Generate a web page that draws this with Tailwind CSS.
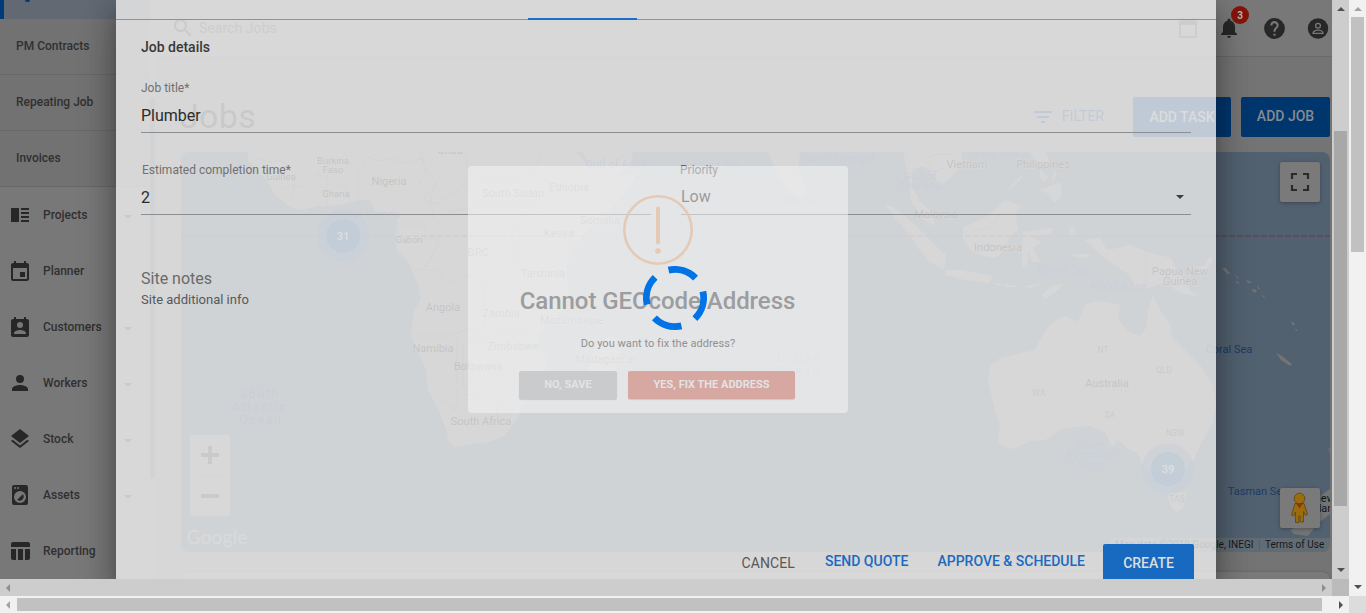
<!DOCTYPE html>
<html lang="en">
<head>
<meta charset="utf-8">
<title>Jobs</title>
<script src="https://cdn.jsdelivr.net/npm/@tailwindcss/browser@4"></script>
</head>
<body class="w-[1366px] h-[613px] overflow-hidden font-['Roboto',sans-serif] bg-[#f1f1f1]">
<div class="grid grid-cols-[1349px_17px] grid-rows-[596px_17px] w-[1366px] h-[613px]">
  <div class="relative grid grid-cols-[1332px_17px] grid-rows-[579px_17px] overflow-hidden">
    <!-- Page -->
    <div class="relative flex overflow-hidden bg-[#747474]">
      <aside class="w-[155px] h-[579px] shrink-0 flex bg-[#787878] text-[#303030] text-xs font-medium">
        <nav class="w-[150px] flex flex-col">
          <div class="relative h-[19px] bg-[#626973] border-l-4 border-[#003a78] shrink-0">
            <div class="ml-[21px] w-[5px] h-[2px] rounded-b-full bg-[#003a78]"></div>
          </div>
          <div class="h-14 shrink-0 pl-4 pb-[1px] flex items-center bg-[#727272] border-b border-[#686868]">PM Contracts</div>
          <div class="h-14 shrink-0 pl-4 pb-[1px] flex items-center bg-[#727272] border-b border-[#686868]">Repeating Job</div>
          <div class="h-14 shrink-0 pl-4 pb-[1px] flex items-center bg-[#727272] border-b border-[#686868]">Invoices</div>
          <div class="h-14 shrink-0 pl-2 pr-[18px] flex items-center gap-[11px]">
            <svg class="size-6" viewBox="0 0 24 24" fill="#272727"><path d="M3 5h8v14H3zM13 5h8v2h-8zM13 9h8v2h-8zM13 13h8v2h-8zM13 17h8v2h-8z"/></svg>
            <span class="grow">Projects</span><i class="border-x-[4px] border-t-[4px] border-x-transparent border-t-[#353535] mt-1"></i>
          </div>
          <div class="h-14 shrink-0 pl-2 pr-[18px] flex items-center gap-[11px]">
            <svg class="size-6" viewBox="0 0 24 24" fill="#272727"><path d="M17 13h-5v5h5zM16 2v2H8V2H6v2H5c-1.100 0-2 .9-2 2v14c0 1.100.9 2 2 2h14c1.100 0 2-.9 2-2V6c0-1.100-.9-2-2-2h-1V2zm3 18H5V9h14z"/></svg>
            <span>Planner</span>
          </div>
          <div class="h-14 shrink-0 pl-2 pr-[18px] flex items-center gap-[11px]">
            <svg class="size-6" viewBox="0 0 24 24" fill="#272727"><path d="M19 4h-1V2h-2v2H8V2H6v2H5a2 2 0 0 0-2 2v14a2 2 0 0 0 2 2h14a2 2 0 0 0 2-2V6a2 2 0 0 0-2-2zm-7 3a3 3 0 1 1 0 6 3 3 0 0 1 0-6zm6 12H6v-1c0-2 4-3.100 6-3.100s6 1.100 6 3.100z"/></svg>
            <span class="grow">Customers</span><i class="border-x-[4px] border-t-[4px] border-x-transparent border-t-[#353535] mt-1"></i>
          </div>
          <div class="h-14 shrink-0 pl-2 pr-[18px] flex items-center gap-[11px]">
            <svg class="size-6" viewBox="0 0 24 24" fill="#272727"><path d="M12 12a4 4 0 1 0 0-8 4 4 0 0 0 0 8zm0 2c-2.700 0-8 1.300-8 4v2h16v-2c0-2.700-5.300-4-8-4z"/></svg>
            <span class="grow">Workers</span><i class="border-x-[4px] border-t-[4px] border-x-transparent border-t-[#353535] mt-1"></i>
          </div>
          <div class="h-14 shrink-0 pl-2 pr-[18px] flex items-center gap-[11px]">
            <svg class="size-6" viewBox="0 0 24 24" fill="#272727"><path d="M12 18.500 4.600 12.800 3 14l9 7 9-7-1.600-1.300zM12 16l7.400-5.700L21 9l-9-7-9 7 1.600 1.300z"/></svg>
            <span class="grow">Stock</span><i class="border-x-[4px] border-t-[4px] border-x-transparent border-t-[#353535] mt-1"></i>
          </div>
          <div class="h-14 shrink-0 pl-2 pr-[18px] flex items-center gap-[11px]">
            <svg class="size-6" viewBox="0 0 24 24" fill="#272727"><path d="M9.200 16.800a4 4 0 0 0 5.600-5.600zM18 2H6a2 2 0 0 0-2 2v16a2 2 0 0 0 2 2h12a2 2 0 0 0 2-2V4a2 2 0 0 0-2-2zm-8 2a1 1 0 1 1 0 2 1 1 0 0 1 0-2zM7 4a1 1 0 1 1 0 2 1 1 0 0 1 0-2zm5 16a6 6 0 1 1 0-12 6 6 0 0 1 0 12z"/></svg>
            <span class="grow">Assets</span><i class="border-x-[4px] border-t-[4px] border-x-transparent border-t-[#353535] mt-1"></i>
          </div>
          <div class="h-14 shrink-0 pl-2 pr-[18px] flex items-center gap-[11px]">
            <svg class="size-6" viewBox="0 0 24 24" fill="#272727"><path d="M10 10.020h5V21h-5zM17 21h3c1.100 0 2-.9 2-2v-9h-5zM20 3H5c-1.100 0-2 .9-2 2v3h19V5c0-1.100-.9-2-2-2zM3 19c0 1.100.9 2 2 2h3V10H3z"/></svg>
            <span>Reporting</span>
          </div>
        </nav>
        <div class="w-[5px] h-[382px] mt-[97px] rounded-full bg-[#5d6266]"></div>
      </aside>
      <main class="w-[1177px] shrink-0">
        <header class="h-[57px] border-b border-[#6a6a6a] bg-[#787878] flex items-center">
          <svg class="ml-4 size-6 shrink-0" viewBox="0 0 24 24" fill="#353535"><path d="M15.500 14h-.8l-.3-.3A6.500 6.500 0 1 0 13.700 14.400l.3.3v.8l5 5 1.500-1.500zm-6 0a4.500 4.500 0 1 1 0-9 4.500 4.500 0 0 1 0 9z"/></svg>
          <span class="ml-1 text-sm text-[#404040] tracking-[.05px]">Search Jobs</span>
          <div class="ml-auto flex items-center">
            <svg class="size-6 mr-[18px]" viewBox="0 0 24 24" fill="#404040"><path d="M19 4h-1V2h-2v2H8V2H6v2H5c-1.100 0-2 .9-2 2v14c0 1.100.9 2 2 2h14c1.100 0 2-.9 2-2V6c0-1.100-.9-2-2-2zm0 16H5V9h14z"/></svg>
            <div class="relative mr-[21px] -ml-px">
              <svg class="size-6" viewBox="0 0 24 24" fill="#272727"><path d="M12 22c1.100 0 2-.9 2-2h-4c0 1.100.9 2 2 2zm6-6v-5c0-3.100-1.600-5.600-4.500-6.300V4a1.500 1.500 0 0 0-3 0v.7C7.600 5.400 6 7.900 6 11v5l-2 2v1h16v-1z"/></svg>
              <span class="absolute left-[14px] -top-[10px] size-[18px] rounded-full bg-[#85150a] text-[#b5b5b5] text-[10px] font-bold flex items-center justify-center">3</span>
            </div>
            <svg class="size-[25px] mr-[19px]" viewBox="0 0 24 24" fill="#272727"><path d="M12 2a10 10 0 1 0 0 20 10 10 0 0 0 0-20zm1 17h-2v-2h2zm2.100-7.700-.9.900c-.7.700-1.200 1.300-1.200 2.800h-2v-.5c0-1.100.5-2.100 1.200-2.800l1.200-1.300a2 2 0 1 0-3.400-1.400H8a4 4 0 1 1 7.100 2.300z"/></svg>
            <svg class="size-6 mr-[2px]" viewBox="0 0 24 24"><circle cx="12" cy="12.500" r="10.200" fill="#272727"/><circle cx="12" cy="9.800" r="2.400" fill="none" stroke="#787878" stroke-width="1.300"/><path d="M7 17.300c0-2.200 3-3.100 5-3.100s5 .9 5 3.100z" fill="none" stroke="#787878" stroke-width="1.300"/></svg>
          </div>
        </header>
        <div class="h-[95px] pl-[25px] pr-[2px] flex items-center">
          <h1 class="text-[34px] tracking-[0.3px] text-[#303030] mt-[24px] font-normal">Jobs</h1>
          <div class="ml-auto mt-[25px] flex items-center text-sm font-medium">
            <svg class="size-6" viewBox="0 0 24 24" fill="#003870"><path d="M10 18h4v-2h-4zM3 6v2h18V6zm3 7h12v-2H6z"/></svg>
            <span class="ml-[7px] mr-[29px] pb-[3px] text-[#003870] font-normal">FILTER</span>
            <span class="w-[98px] h-10 pb-px rounded-[2px] bg-[#00366e] text-[#868b90] flex items-center justify-center">ADD TASK</span>
            <span class="ml-[10px] w-[89px] h-10 pb-[2px] rounded-[2px] bg-[#00366e] text-[#868b90] flex items-center justify-center">ADD JOB</span>
          </div>
        </div>
        <div class="relative ml-[26px] w-[1149px] h-[400px] rounded-lg overflow-hidden bg-[#526170]">
          <svg class="block w-[1149px] h-[400px]" viewBox="181 152 1149 400" font-size="11" text-anchor="middle">
            <g fill="#747474">
              <path d="M248 152V160L258 172 267 180 275 195 290 207 302 210 318 206 340 205 358 200 370 200 376 212 398 215 397 230 395 240 397 250 407 260 412 270 418 285 421 300 414 310 411 335 418 352 426 370 428 390 436 405 442 418 447 432 448 440 455 447 470 444 490 442 505 435 518 418 522 405 530 395 532 385 546 372 546 358 537 345 537 335 550 320 566 308 568 290 566 265 574 246 590 228 612 208 630 186 636 174 610 177 596 177 588 165 576 152Z"/>
              <path d="M583 152H633L630 166 613 178 598 183 588 165ZM768 152H800L798 170 807 190 802 199 788 190 778 174ZM588 372 595 346 612 335 622 345 614 372 606 385 594 386Z"/>
              <path d="M903 152H961L962 165 950 178 940 186 937 180 930 170 922 166 912 170 912 188 921 203 931 211 935 226 924 220 912 203 908 176Z"/>
              <path d="M885 204 895 208 915 225 935 245 946 255 944 270 930 262 918 248 908 232 895 218ZM945 270 960 270 992 276 990 283 965 280 946 275ZM963 227 975 222 990 215 1005 200 1022 206 1015 213 1018 230 1010 235 1005 250 995 258 980 255 970 250 963 238ZM1023 232 1053 228 1050 234 1030 236 1042 243 1032 248 1041 262 1033 262 1028 250 1027 268 1022 266 1022 250ZM1029 152H1046L1050 164 1040 164ZM1039 190 1050 186 1060 182 1062 195 1055 203 1047 193ZM1040 170 1048 176 1045 182 1040 177ZM1054 170 1057 174 1052 182ZM1009 188 1022 175 1023 177 1013 187ZM993 283 1003 284 998 286ZM1004 284 1020 287 1007 287ZM1025 286 1042 284 1030 288ZM1042 295 1052 286 1065 284 1055 292 1045 299ZM1069 230 1073 226 1076 234 1071 239ZM1072 254 1090 254 1087 258 1075 257Z"/>
              <path d="M1085 240 1100 238 1107 250 1118 248 1130 245 1148 252 1170 258 1180 275 1190 290 1199 297 1180 293 1165 282 1148 288 1135 288 1130 275 1115 265 1102 256ZM1188 268 1203 266 1210 257 1213 261 1204 271 1192 273Z"/>
              <path d="M988 380 990 366 1000 358 1035 350 1040 340 1050 325 1065 316 1078 322 1085 305 1097 301 1120 305 1118 320 1130 333 1141 336 1147 326 1148 310 1153 296 1160 310 1170 325 1172 337 1185 350 1200 365 1212 385 1216 405 1212 425 1200 445 1194 460 1180 475 1165 475 1145 470 1138 453 1130 450 1118 440 1112 446 1105 432 1090 426 1075 427 1060 430 1045 440 1030 441 1020 446 1010 449 998 443 1000 425 995 410 990 390ZM1167 492H1187L1183 508 1176 512 1170 505Z"/>
              <path d="M1222 268 1226 268 1230 274 1227 274ZM1234 274 1240 279 1237 278ZM1236 281 1240 283 1237 284ZM1246 279 1252 283 1248 283ZM1251 289 1257 290 1255 293ZM1257 285 1260 289 1258 289ZM1261 294 1266 298 1263 297ZM1291 321 1295 324 1293 326ZM1295 328 1298 331 1296 331ZM1276 353 1282 356 1292 364 1290 366 1281 360ZM1328 447 1331 450V456ZM1320 496 1330 489V514L1318 523 1308 536 1294 534 1290 530 1308 522Z"/>
            </g>
            <g fill="none" stroke="#606060" stroke-width="1">
              <path d="M253 158l18 4 10 -2 8 7M258 172l18 -3M268 180l10 -10M282 190l9 -5 12 2 9 -9 8 -7M296 174l-4 26M316 175l11 2 0 28M328 179l16 8 8 17M358 200v-25l9 -18 13 4 10 -3 15 5 17 -4 4 12 -8 15 -14 14 -10 9 -5 12M427 170l10 14 -14 15 14 5 31 -22M344 152l8 15M420 152l4 10M465 152l4 20 30 12 32 -10 10 -18M434 184l-4 20 5 15M435 225l16 -14 35 -5 22 -2 30 4M398 224h27v15h14l-5 15 -12 16M414 270h24l8 14 16 -8h10l12 6v48h-20l-12 6h-42M508 270l12 -10 -8 -28 15 -17M517 285l20 15 10 30M470 340h22l10 -8 30 2M457 406v-70M463 342v46l22 -18 26 6 14 12M462 395l20 -1 22 -24M436 406l6 -5 12 8 4 -1M500 405l8 6 -4 8 -8 -4z"/>
              <path d="M927 158l9 -4h19M903 152l6 8 -1 10M926 160l6 12 12 -4M912 198l10 4M968 226l5 5 18 -3 9 -14h11M1146 251v36"/>
              <path stroke-dasharray="1 3" d="M1077 320v108M1077 390h49M1128 336v55M1126 391v60M1126 408h45"/>
            </g>
            <path d="M181 236H1330" stroke="#5a4c5c" stroke-width="2" stroke-dasharray="6 2"/>
            <g fill="#354a80">
              <text x="365" y="218">Gulf of Guinea</text><text x="616" y="168">Gulf of Aden</text><text x="712" y="169">Arabian Sea</text><text x="840" y="162">Bay of Bengal</text><text x="786" y="204">Laccadive Sea</text><text x="993" y="157">China Sea</text>
              <text x="920" y="180">Gulf of</text><text x="920" y="189">Thailand</text><text x="1063" y="273">Banda Sea</text><text x="1118" y="290">Arafura Sea</text><text x="1229" y="353" fill="#203a63">Coral Sea</text><text x="1258" y="495" fill="#203a63">Tasman Sea</text>
              <text x="1090" y="449">Great</text><text x="1090" y="458">Australian</text><text x="1090" y="468">Bight</text>
              <g letter-spacing="1.900" font-size="12" fill="#35406c"><text x="260" y="398">South</text><text x="260" y="411">Atlantic</text><text x="261" y="424">Ocean</text><text x="799" y="362">Indian</text><text x="799" y="375">Ocean</text></g>
            </g>
            <g fill="#101010" stroke="#787878" stroke-width="1" paint-order="stroke">
              <g font-size="9.500"><text x="333" y="164">Burkina</text><text x="333" y="173">Faso</text><text x="336" y="197">Ghana</text><text x="281" y="180">Guinea</text><text x="409" y="243">Gabon</text></g>
              <text x="389" y="185">Nigeria</text><text x="450" y="154">Chad</text><text x="513" y="197">South Sudan</text><text x="569" y="191">Ethiopia</text><text x="600" y="224">Somalia</text><text x="559" y="237">Kenya</text><text x="478" y="256">DRC</text><text x="543" y="277">Tanzania</text><text x="443" y="311">Angola</text><text x="501" y="317">Zambia</text><text x="572" y="324">Mozambique</text><text x="433" y="352">Namibia</text><text x="513" y="350">Zimbabwe</text><text x="478" y="370">Botswana</text><text x="606" y="363">Madagascar</text><text x="481" y="425">South Africa</text>
              <text x="967" y="168">Vietnam</text><text x="1043" y="168">Philippines</text><text x="936" y="218">Malaysia</text><text x="998" y="251">Indonesia</text><text x="1180" y="275">Papua New</text><text x="1180" y="285">Guinea</text><text x="1107" y="387">Australia</text><text x="1324" y="502">New</text><text x="1320" y="512">Zealand</text>
              <g font-size="8.500" fill="#303030"><text x="1103" y="353">NT</text><text x="1164" y="373">QLD</text><text x="1039" y="396">WA</text><text x="1110" y="418">SA</text><text x="1175" y="436">NSW</text><text x="1177" y="502">TAS</text></g>
            </g>
            <g fill="#204a86"><circle cx="343" cy="236" r="26" fill-opacity=".45"/><circle cx="343" cy="236" r="17" fill="#003d73" fill-opacity=".75"/><circle cx="1168" cy="469" r="26" fill-opacity=".45"/><circle cx="1168" cy="469" r="17" fill="#003d73" fill-opacity=".75"/></g>
            <g fill="#909090" font-weight="700" font-size="11"><text x="343" y="240">31</text><text x="1168" y="473">39</text></g>
            <text x="217" y="544" font-size="19" font-family="Lato" fill="#808080" stroke="#5a626a" stroke-width="1.500" paint-order="stroke" textLength="61">Google</text>
          </svg>
          <div class="absolute left-[9px] top-[283px] w-10 h-[81px] rounded-[2px] bg-[#787878] flex flex-col items-center">
            <svg class="w-10 h-20" viewBox="0 0 40 80"><path d="M11 20h18M20 11v18M11 61h18" stroke="#333" stroke-width="4"/><path d="M5 40.500h30" stroke="#6c6c6c"/></svg>
          </div>
          <div class="absolute left-[1099px] top-[10px] size-10 rounded-[2px] bg-[#7a7a7a] shadow-[0_1px_4px_rgba(0,0,0,.3)]">
            <svg class="size-10" viewBox="0 0 40 40" fill="none" stroke="#2b2b2b" stroke-width="2.200"><path d="M12 17v-5h5M23 12h5v5M28 23v5h-5M17 28h-5v-5"/></svg>
          </div>
          <div class="absolute left-[1099px] top-[336px] size-10 rounded-[2px] bg-[#7a7a7a] shadow-[0_1px_4px_rgba(0,0,0,.3)]">
            <svg class="size-10" viewBox="0 0 40 40" fill="#9c6c0b" stroke="#5b4216" stroke-width=".8"><path d="M15 15.500h9l3.500 11-2 1-2-4v10.500h-3.300V28h-1.400v6.500h-3.300V24l-2 4-2-1z"/><circle cx="19.500" cy="10.500" r="5.300"/><path d="M16 15.500h7l-3.500 5z" fill="#89390e" stroke="none"/></svg>
          </div>
          <div class="absolute left-[929px] right-0 bottom-0 h-[14px] pb-px flex items-center text-[10px] leading-none text-[#181818] bg-[#6a7178]/70">
            <span class="pl-[5px] w-[149px] whitespace-nowrap">Map data ©2019 Google, INEGI</span><span class="pl-[5px] border-l border-[#526170]">Terms of Use</span>
          </div>
        </div>
        <div class="ml-[26px] mt-5 w-[1149px] h-10 rounded-t-lg bg-[#7a7a7a] shadow-[0_0_3px_rgba(0,0,0,.2)]"></div>
      </main>

      <!-- Job form -->
      <section class="absolute left-[116px] top-0 w-[1100px] h-[579px] bg-[#f0f0f0]/80 shadow-[0_11px_15px_-7px_rgba(0,0,0,.2),0_24px_38px_3px_rgba(0,0,0,.16),0_9px_26px_4px_rgba(0,0,0,.22)] flex flex-col">
        <div class="h-5 shrink-0 border-b border-[#909396] flex items-end"><i class="ml-[412px] w-[109px] h-[2px] bg-[#1a6fc9] -mb-px"></i></div>
        <div class="px-[25px] flex flex-col text-[#383838]">
          <h2 class="mt-[17px] h-5 leading-5 text-sm font-medium">Job details</h2>
          <label class="mt-[22px] h-4 leading-[18px] text-xs text-[#707070]">Job title*</label>
          <div class="h-[38px] pt-[10px] leading-[22px] text-base w-[1050px] border-b border-[#8c8e90] text-[#2b2b2b] flex items-start">Plumber</div>
          <div class="mt-[29px] flex gap-[30px]">
            <div class="w-[510px]">
              <div class="h-4 leading-4 pl-px text-xs text-[#707070]">Estimated completion time*</div>
              <div class="h-[37px] pt-[9px] leading-[22px] text-base border-b border-[#8c8e90] text-[#2b2b2b]">2</div>
            </div>
            <div class="w-[510px]">
              <div class="h-4 leading-4 text-xs text-[#606060] -ml-px">Priority</div>
              <div class="h-[37px] pt-[8px] pr-[7px] leading-[22px] text-base border-b border-[#8c8e90] flex justify-between text-[#3c3c3c]">Low<i class="mt-[9px] border-x-[4px] border-t-[4px] border-x-transparent border-t-[#3c3c3c] h-0"></i></div>
            </div>
          </div>
          <div class="mt-[53px] h-[22px] leading-[22px] text-base text-[#6a6a6a]">Site notes</div>
          <div class="h-5 leading-5 text-[13px] text-[#585858]">Site additional info</div>
        </div>
        <footer class="mt-auto h-[35px] pr-[22px] flex justify-end text-sm font-medium leading-[20px] text-[#1a6ac0]">
          <span class="mt-[9px] mr-[30px] text-[#585858] font-normal tracking-[.1px]">CANCEL</span>
          <span class="mt-[7px] mr-[29px]">SEND QUOTE</span>
          <span class="mt-[7px] mr-[18px]">APPROVE &amp; SCHEDULE</span>
          <span class="w-[91px] h-[35px] pt-[9px] text-center bg-[#186ac1] text-[#dedede] rounded-t-[2px]">CREATE</span>
        </footer>
      </section>

      <!-- Address warning -->
      <section class="absolute left-[468px] top-[166px] w-[380px] h-[247px] rounded-[4px] bg-[#f8f8f8]/50 flex flex-col items-center">
        <svg class="mt-[29px] size-[70px] shrink-0" viewBox="0 0 70 70" fill="none" stroke="#e4cab5"><circle cx="35" cy="35" r="33.700" stroke-width="2.600"/><path d="M35 13.500v34" stroke-width="4" stroke-linecap="round"/><circle cx="35" cy="56" r="2.800" fill="#e4cab5" stroke="none"/></svg>
        <h3 class="mt-[20px] h-8 leading-8 text-[24px] font-medium text-[#9c9d9e] whitespace-nowrap -tracking-[.05px] -ml-px">Cannot GEOcode Address</h3>
        <p class="mt-[19px] h-4 leading-4 text-[11px] tracking-[.05px] text-[#8f9091]">Do you want to fix the address?</p>
        <div class="mt-[19px] -ml-[2px] flex gap-[11px] text-[11px] font-bold text-[#e2e3e4]">
          <span class="w-[98px] h-[28px] rounded-[2px] bg-[#c9cbcc] shadow-[0_1px_1px_rgba(0,0,0,.12)] flex items-center justify-center">NO, SAVE</span>
          <span class="w-[167px] h-[28px] rounded-[2px] bg-[#d6a8a1] shadow-[0_1px_1px_rgba(0,0,0,.12)] flex items-center justify-center">YES, FIX THE ADDRESS</span>
        </div>
      </section>
      <svg class="absolute left-[643px] top-[266px] size-16" viewBox="0 0 64 64" fill="none" stroke="#0073e6" stroke-width="6.800"><circle cx="32" cy="32" r="28.600" pathLength="360" stroke-dasharray="59 31" transform="rotate(-13 32 32)"/></svg>
    </div>

    <!-- Inner scrollbars -->
    <div class="relative bg-[#cdcdcd] flex flex-col items-center">
      <i class="mt-[7px] border-x-[4px] border-b-[4px] border-x-transparent border-b-[#505050]"></i>
      <i class="mt-[120px] w-[13px] h-[375px] bg-[#a8a8a8]"></i>
      <i class="mt-[62px] border-x-[4px] border-t-[4px] border-x-transparent border-t-[#505050]"></i>
    </div>
    <div class="bg-[#cdcdcd] flex items-center justify-between px-[6px]">
      <i class="border-y-[4px] border-r-[4px] border-y-transparent border-r-[#8e8e8e]"></i>
      <i class="border-y-[4px] border-l-[4px] border-y-transparent border-l-[#8e8e8e]"></i>
    </div>
    <div class="bg-[#bbbbbb]"></div>
  </div>

  <!-- Outer scrollbars -->
  <div class="flex flex-col items-center bg-[#f1f1f1]">
    <i class="mt-[7px] border-x-[4px] border-b-[4px] border-x-transparent border-b-[#a3a3a3]"></i>
    <i class="mt-[6px] w-[13px] h-[235px] bg-[#c1c1c1]"></i>
    <i class="mt-auto mb-[7px] border-x-[4px] border-t-[4px] border-x-transparent border-t-[#505050]"></i>
  </div>
  <div class="flex items-center bg-[#f1f1f1]">
    <i class="ml-[6px] border-y-[4px] border-r-[4px] border-y-transparent border-r-[#a3a3a3]"></i>
    <i class="ml-[7px] w-[1305px] h-[13px] bg-[#c1c1c1]"></i>
    <i class="ml-auto mr-[6px] border-y-[4px] border-l-[4px] border-y-transparent border-l-[#505050]"></i>
  </div>
  <div class="bg-[#dcdcdc]"></div>
</div>
</body>
</html>
